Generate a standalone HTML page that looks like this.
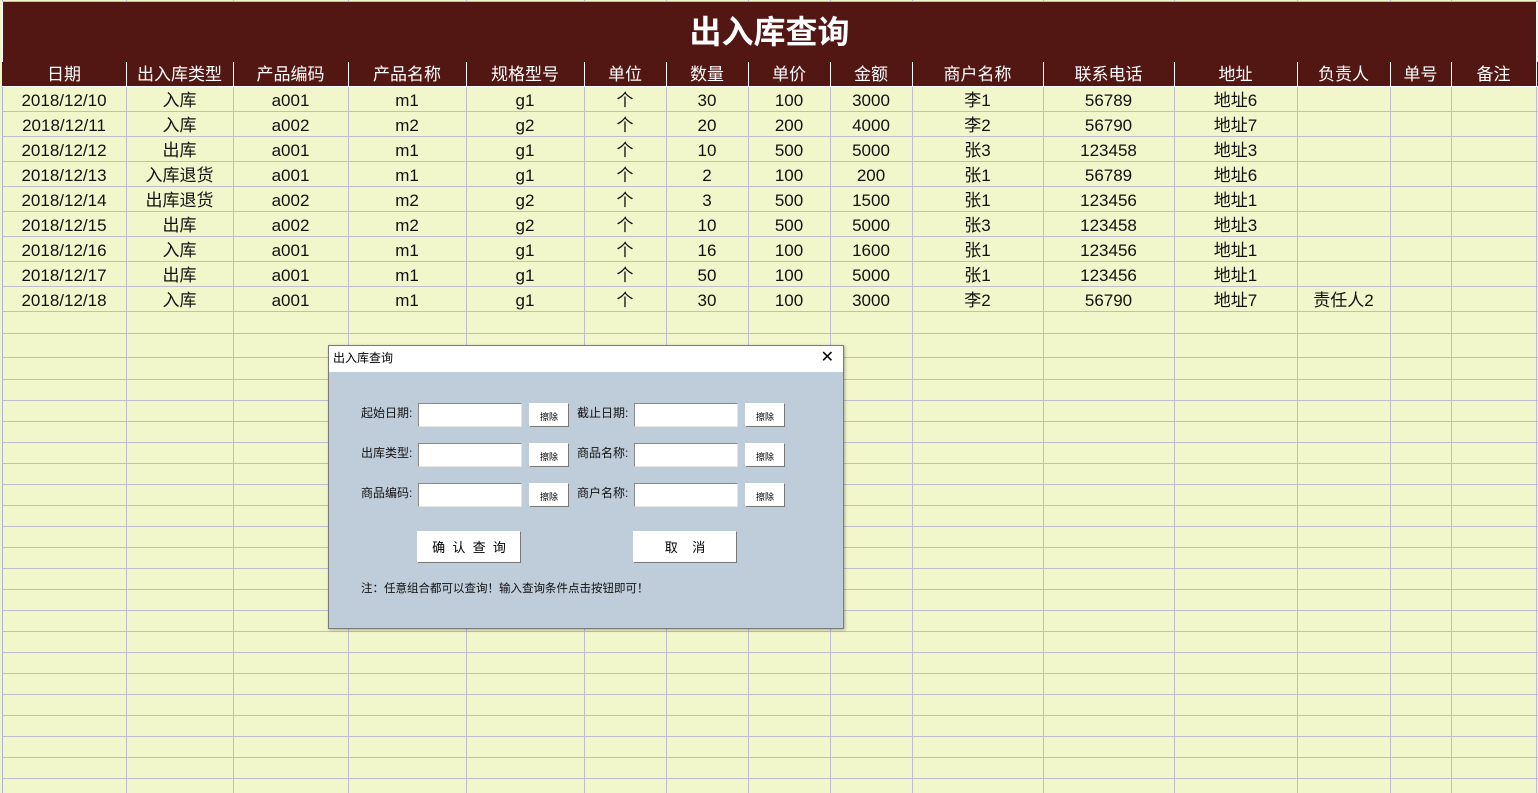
<!DOCTYPE html>
<html><head><meta charset="utf-8">
<style>
*{margin:0;padding:0;box-sizing:border-box}
body{width:1538px;height:793px;overflow:hidden;background:#F2F7CB;position:relative;font-family:"Liberation Sans","Noto Sans CJK SC",sans-serif}
.hl{position:absolute;left:2px;width:1536px;height:1px;background:#BDBDCF}
.vl{position:absolute;top:0;width:1px;height:793px;background:#BDBDCF}
.title{position:absolute;left:2px;top:2px;width:1535px;height:60px;background:#531713;color:#fff;font-size:32px;font-weight:bold;text-align:center;line-height:60px;border-left:1px solid #fff;border-right:1px solid #fff;font-family:"Liberation Sans","Noto Sans CJK SC",sans-serif}
.row{position:absolute;left:2px;height:25px;width:1536px;border-bottom:1px solid #BDBDCF}
.row div{position:absolute;top:0;height:25px;line-height:27px;text-align:center;font-size:17px;color:#111;white-space:nowrap;border-right:1px solid #BDBDCF}
.row.h{background:#531713;border-bottom:1px solid #fff}
.row.h div{color:#fff;border-right:1px solid #fff;line-height:26px}
.dlg{position:absolute;left:328px;top:345px;width:516px;height:284px;background:#BFCCD9;border:1px solid #7a7a7a;box-shadow:1px 1px 3px rgba(0,0,0,.3);font-family:"Liberation Sans","Noto Sans CJK SC",sans-serif}
.tb{height:26px;background:#fff;font-size:12px;line-height:25px;padding-left:4px;position:relative}
.x{position:absolute;right:9px;top:0;font-size:16px;line-height:24px;font-weight:300}
.lb{position:absolute;font-size:12px;color:#111}
.in{position:absolute;width:104px;height:24px;background:#fff;border:1px solid;border-color:#8a8a8a #e6e6e6 #e6e6e6 #8a8a8a}
.bt{position:absolute;width:40px;height:24px;background:#fff;border:1px solid;border-color:#fff #777 #777 #fff;font-size:9px;text-align:center;line-height:26px}
.bb{position:absolute;width:104px;height:32px;background:#fff;border:1px solid;border-color:#fff #777 #777 #fff;font-size:13px;text-align:center;line-height:32px}
.c1{left:0;width:125px}.c2{left:124px;width:108px}.c3{left:231px;width:116px}.c4{left:346px;width:119px}.c5{left:464px;width:119px}.c6{left:582px;width:83px}.c7{left:664px;width:83px}.c8{left:746px;width:83px}.c9{left:828px;width:83px}.c10{left:910px;width:132px}.c11{left:1041px;width:132px}.c12{left:1172px;width:124px}.c13{left:1295px;width:94px}.c14{left:1388px;width:62px}.c15{left:1449px;width:86px}
</style></head><body>
<div class="vl" style="left:2px;background:#A8B0D8"></div>
<div class="hl" style="top:333px"></div><div class="hl" style="top:357px"></div>
<div class="hl" style="top:379px"></div><div class="hl" style="top:400px"></div><div class="hl" style="top:421px"></div><div class="hl" style="top:442px"></div><div class="hl" style="top:463px"></div><div class="hl" style="top:484px"></div><div class="hl" style="top:505px"></div><div class="hl" style="top:526px"></div><div class="hl" style="top:547px"></div><div class="hl" style="top:568px"></div><div class="hl" style="top:589px"></div><div class="hl" style="top:610px"></div><div class="hl" style="top:631px"></div><div class="hl" style="top:652px"></div><div class="hl" style="top:673px"></div><div class="hl" style="top:694px"></div><div class="hl" style="top:715px"></div><div class="hl" style="top:736px"></div><div class="hl" style="top:757px"></div><div class="hl" style="top:778px"></div>
<div class="vl" style="left:126px"></div><div class="vl" style="left:233px"></div><div class="vl" style="left:348px"></div><div class="vl" style="left:466px"></div><div class="vl" style="left:584px"></div><div class="vl" style="left:666px"></div><div class="vl" style="left:748px"></div><div class="vl" style="left:830px"></div><div class="vl" style="left:912px"></div><div class="vl" style="left:1043px"></div><div class="vl" style="left:1174px"></div><div class="vl" style="left:1297px"></div><div class="vl" style="left:1390px"></div><div class="vl" style="left:1451px"></div><div class="vl" style="left:1536px"></div>
<div class="hl" style="top:1px"></div>
<div class="title">出入库查询</div>

<div class="row h" style="top:62px"><div class="c1">日期</div><div class="c2">出入库类型</div><div class="c3">产品编码</div><div class="c4">产品名称</div><div class="c5">规格型号</div><div class="c6">单位</div><div class="c7">数量</div><div class="c8">单价</div><div class="c9">金额</div><div class="c10">商户名称</div><div class="c11">联系电话</div><div class="c12">地址</div><div class="c13">负责人</div><div class="c14">单号</div><div class="c15">备注</div></div>
<div class="row" style="top:87px"><div class="c1">2018/12/10</div><div class="c2">入库</div><div class="c3">a001</div><div class="c4">m1</div><div class="c5">g1</div><div class="c6">个</div><div class="c7">30</div><div class="c8">100</div><div class="c9">3000</div><div class="c10">李1</div><div class="c11">56789</div><div class="c12">地址6</div></div>
<div class="row" style="top:112px"><div class="c1">2018/12/11</div><div class="c2">入库</div><div class="c3">a002</div><div class="c4">m2</div><div class="c5">g2</div><div class="c6">个</div><div class="c7">20</div><div class="c8">200</div><div class="c9">4000</div><div class="c10">李2</div><div class="c11">56790</div><div class="c12">地址7</div></div>
<div class="row" style="top:137px"><div class="c1">2018/12/12</div><div class="c2">出库</div><div class="c3">a001</div><div class="c4">m1</div><div class="c5">g1</div><div class="c6">个</div><div class="c7">10</div><div class="c8">500</div><div class="c9">5000</div><div class="c10">张3</div><div class="c11">123458</div><div class="c12">地址3</div></div>
<div class="row" style="top:162px"><div class="c1">2018/12/13</div><div class="c2">入库退货</div><div class="c3">a001</div><div class="c4">m1</div><div class="c5">g1</div><div class="c6">个</div><div class="c7">2</div><div class="c8">100</div><div class="c9">200</div><div class="c10">张1</div><div class="c11">56789</div><div class="c12">地址6</div></div>
<div class="row" style="top:187px"><div class="c1">2018/12/14</div><div class="c2">出库退货</div><div class="c3">a002</div><div class="c4">m2</div><div class="c5">g2</div><div class="c6">个</div><div class="c7">3</div><div class="c8">500</div><div class="c9">1500</div><div class="c10">张1</div><div class="c11">123456</div><div class="c12">地址1</div></div>
<div class="row" style="top:212px"><div class="c1">2018/12/15</div><div class="c2">出库</div><div class="c3">a002</div><div class="c4">m2</div><div class="c5">g2</div><div class="c6">个</div><div class="c7">10</div><div class="c8">500</div><div class="c9">5000</div><div class="c10">张3</div><div class="c11">123458</div><div class="c12">地址3</div></div>
<div class="row" style="top:237px"><div class="c1">2018/12/16</div><div class="c2">入库</div><div class="c3">a001</div><div class="c4">m1</div><div class="c5">g1</div><div class="c6">个</div><div class="c7">16</div><div class="c8">100</div><div class="c9">1600</div><div class="c10">张1</div><div class="c11">123456</div><div class="c12">地址1</div></div>
<div class="row" style="top:262px"><div class="c1">2018/12/17</div><div class="c2">出库</div><div class="c3">a001</div><div class="c4">m1</div><div class="c5">g1</div><div class="c6">个</div><div class="c7">50</div><div class="c8">100</div><div class="c9">5000</div><div class="c10">张1</div><div class="c11">123456</div><div class="c12">地址1</div></div>
<div class="row" style="top:287px"><div class="c1">2018/12/18</div><div class="c2">入库</div><div class="c3">a001</div><div class="c4">m1</div><div class="c5">g1</div><div class="c6">个</div><div class="c7">30</div><div class="c8">100</div><div class="c9">3000</div><div class="c10">李2</div><div class="c11">56790</div><div class="c12">地址7</div><div class="c13">责任人2</div></div>

<div class="dlg">
<div class="tb">出入库查询<span class="x">✕</span></div>
<div class="lb" style="left:32px;top:58px">起始日期:</div><div class="in" style="left:89px;top:57px"></div><div class="bt" style="left:200px;top:57px">擦除</div>
<div class="lb" style="left:248px;top:58px">截止日期:</div><div class="in" style="left:305px;top:57px"></div><div class="bt" style="left:416px;top:57px">擦除</div>
<div class="lb" style="left:32px;top:98px">出库类型:</div><div class="in" style="left:89px;top:97px"></div><div class="bt" style="left:200px;top:97px">擦除</div>
<div class="lb" style="left:248px;top:98px">商品名称:</div><div class="in" style="left:305px;top:97px"></div><div class="bt" style="left:416px;top:97px">擦除</div>
<div class="lb" style="left:32px;top:138px">商品编码:</div><div class="in" style="left:89px;top:137px"></div><div class="bt" style="left:200px;top:137px">擦除</div>
<div class="lb" style="left:248px;top:138px">商户名称:</div><div class="in" style="left:305px;top:137px"></div><div class="bt" style="left:416px;top:137px">擦除</div>
<div class="bb" style="left:88px;top:185px">确&nbsp;&nbsp;认&nbsp;&nbsp;查&nbsp;&nbsp;询</div>
<div class="bb" style="left:304px;top:185px">取&nbsp;&nbsp;&nbsp;&nbsp;消</div>
<div class="lb" style="left:32px;top:234px;font-size:11.5px">注：任意组合都可以查询！输入查询条件点击按钮即可！</div>
</div>
</body></html>
